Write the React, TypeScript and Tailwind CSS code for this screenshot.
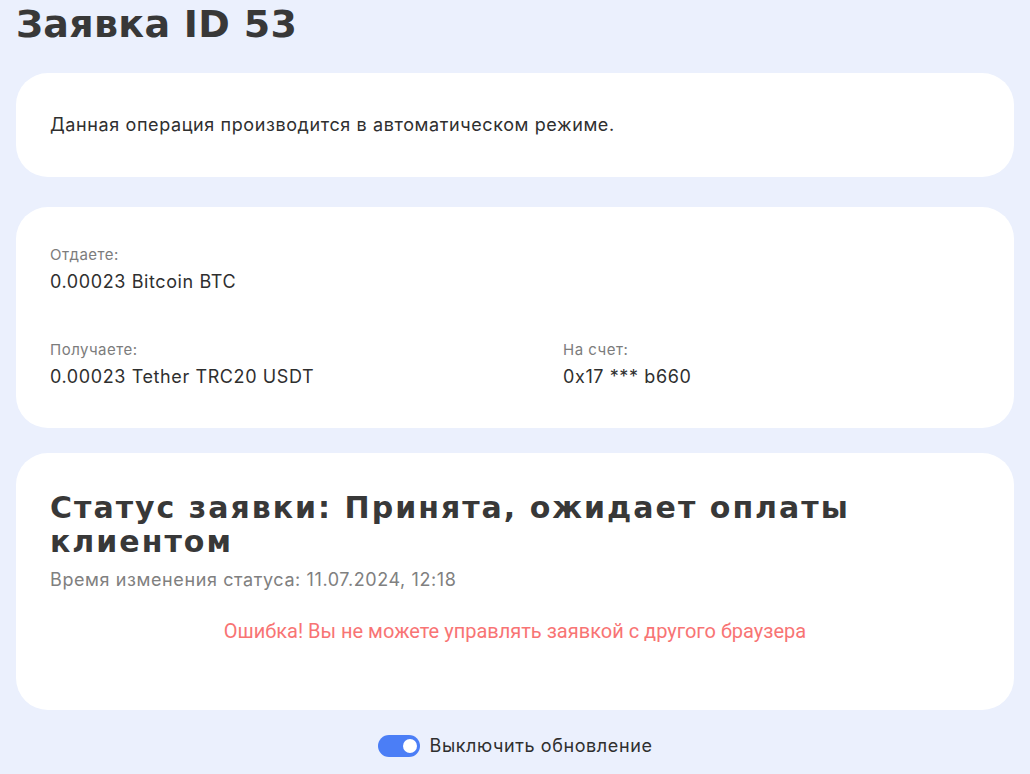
import { useState } from "react";

const body = { fontFamily: "Inter, 'Noto Sans', sans-serif" };
const head = { fontFamily: "'DejaVu Sans', Inter, sans-serif" };

const Field = ({ label, value }: { label: string; value: string }) => (
  <div>
    <div className="text-[15px] leading-[20px] tracking-[0.5px] text-[#7c7c7c]">{label}</div>
    <div className="text-[18px] leading-[26px] tracking-[0.6px] text-[#2f2f2f] mt-[4px]">{value}</div>
  </div>
);

export default function App() {
  const [on, setOn] = useState(true);

  return (
    <div className="min-h-screen bg-[#ebf0fd] px-4 pb-2" style={body}>
      <h1 className="text-[38px] leading-[48px] font-bold tracking-[0.3px] text-[#383838] h-[58px]" style={head}>
        Заявка ID 53
      </h1>

      <div className="flex flex-col">
        <div className="bg-white rounded-[32px] px-[34px] py-[39px] mt-[15px]">
          <p className="text-[18px] leading-[26px] tracking-[0.6px] text-[#2f2f2f]">
            Данная операция производится в автоматическом режиме.
          </p>
        </div>

        <div className="bg-white rounded-[32px] px-[34px] pt-[38px] pb-[38px] mt-[30px]">
          <Field label="Отдаете:" value="0.00023 Bitcoin BTC" />
          <div className="grid grid-cols-[513px_1fr] mt-[45px]">
            <Field label="Получаете:" value="0.00023 Tether TRC20 USDT" />
            <Field label="На счет:" value="0x17 *** b660" />
          </div>
        </div>

        <div className="bg-white rounded-[32px] px-[34px] pt-[38px] pb-[66px] mt-[25px]">
          <h2 className="text-[30px] leading-[34px] font-bold tracking-[2px] text-[#383838] max-w-[880px]" style={head}>
            Статус заявки: Принята, ожидает оплаты клиентом
          </h2>
          <div className="text-[18px] leading-[26px] tracking-[0.6px] text-[#808080] mt-[8px]">
            Время изменения статуса: 11.07.2024, 12:18
          </div>
          <div
            className="text-[20px] leading-[26px] text-[#f87474] text-center mt-[25px]"
            style={{ fontFamily: "Roboto, sans-serif" }}
          >
            Ошибка! Вы не можете управлять заявкой с другого браузера
          </div>
        </div>

        <div className="flex items-center justify-center gap-[10px] mt-[23px]">
          <button
            onClick={() => setOn(!on)}
            className={`w-[42px] h-[22px] rounded-full flex items-center px-[3px] ${on ? "bg-[#4b7ef6] justify-end" : "bg-[#c9d2e6] justify-start"}`}
          >
            <span className="w-[14px] h-[14px] rounded-full bg-white block" />
          </button>
          <span className="text-[18px] leading-[26px] tracking-[0.6px] text-[#2f2f2f]">Выключить обновление</span>
        </div>
      </div>
    </div>
  );
}
